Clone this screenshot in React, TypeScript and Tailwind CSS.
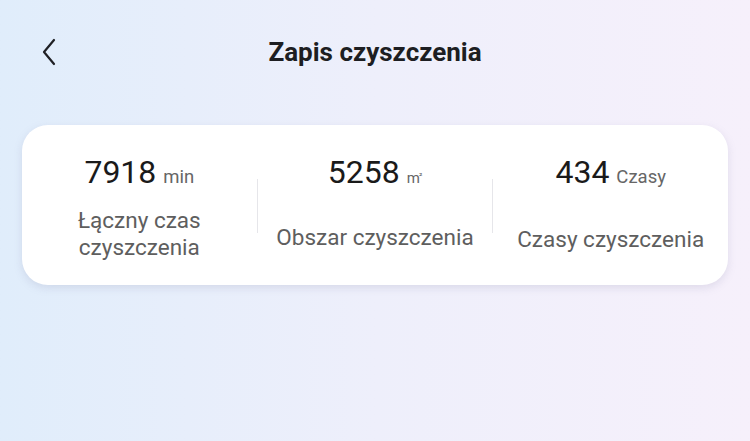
import React from 'react';

const stats = [
  { value: '7918', unit: 'min', label: ['Łączny czas', 'czyszczenia'] },
  { value: '5258', unit: 'm²', label: ['Obszar czyszczenia'] },
  { value: '434', unit: 'Czasy', label: ['Czasy czyszczenia'] },
];

const App: React.FC = () => {
  return (
    <div
      className="w-[750px] h-[441px] overflow-hidden bg-gradient-to-r from-[#e0edfb] via-[#eeeffb] to-[#f6f0fb]"
      style={{ fontFamily: 'Roboto, "Noto Sans", sans-serif' }}
    >
      <header className="relative h-[105px] flex items-center justify-center">
        <button className="absolute left-[36px] top-[36px] w-[26px] h-[32px] flex items-center justify-center text-[#1f2024]">
          <svg width="18" height="28" viewBox="0 0 18 28" fill="none">
            <path d="M14 2 L4 14 L14 26" stroke="currentColor" strokeWidth="2.2" strokeLinecap="round" strokeLinejoin="round" />
          </svg>
        </button>
        <h1 className="text-[26px] font-bold text-[#1d1e22]">Zapis czyszczenia</h1>
      </header>

      <div className="mx-[22px] mt-[20px] h-[160px] bg-white rounded-[26px] shadow-[0_3px_8px_rgba(120,120,160,0.18)] flex items-stretch">
        {stats.map((s, i) => (
          <React.Fragment key={s.value}>
            {i > 0 && <div className="w-px bg-[#e6e6ea] self-center h-[54px] mt-[2px]" />}
            <div className="flex-1 flex flex-col items-center pt-[29px]">
              <div className="flex items-baseline gap-[7px] text-[#1a1a1a]">
                <span className="text-[32px] leading-[36px]">{s.value}</span>
                {s.unit === 'm²' ? (
                  <span className="text-[15px] text-[#666]">
                    m<sup className="text-[9px] -ml-[1px]">²</sup>
                  </span>
                ) : (
                  <span className="text-[18.5px] text-[#666]">{s.unit}</span>
                )}
              </div>
              <div className={`text-[22.5px] leading-[27px] text-[#5e5e5e] text-center ${s.label.length === 1 ? 'mt-[34px]' : 'mt-[15px]'}`}>
                {s.label.map((l) => (
                  <div key={l}>{l}</div>
                ))}
              </div>
            </div>
          </React.Fragment>
        ))}
      </div>
    </div>
  );
};

export default App;
